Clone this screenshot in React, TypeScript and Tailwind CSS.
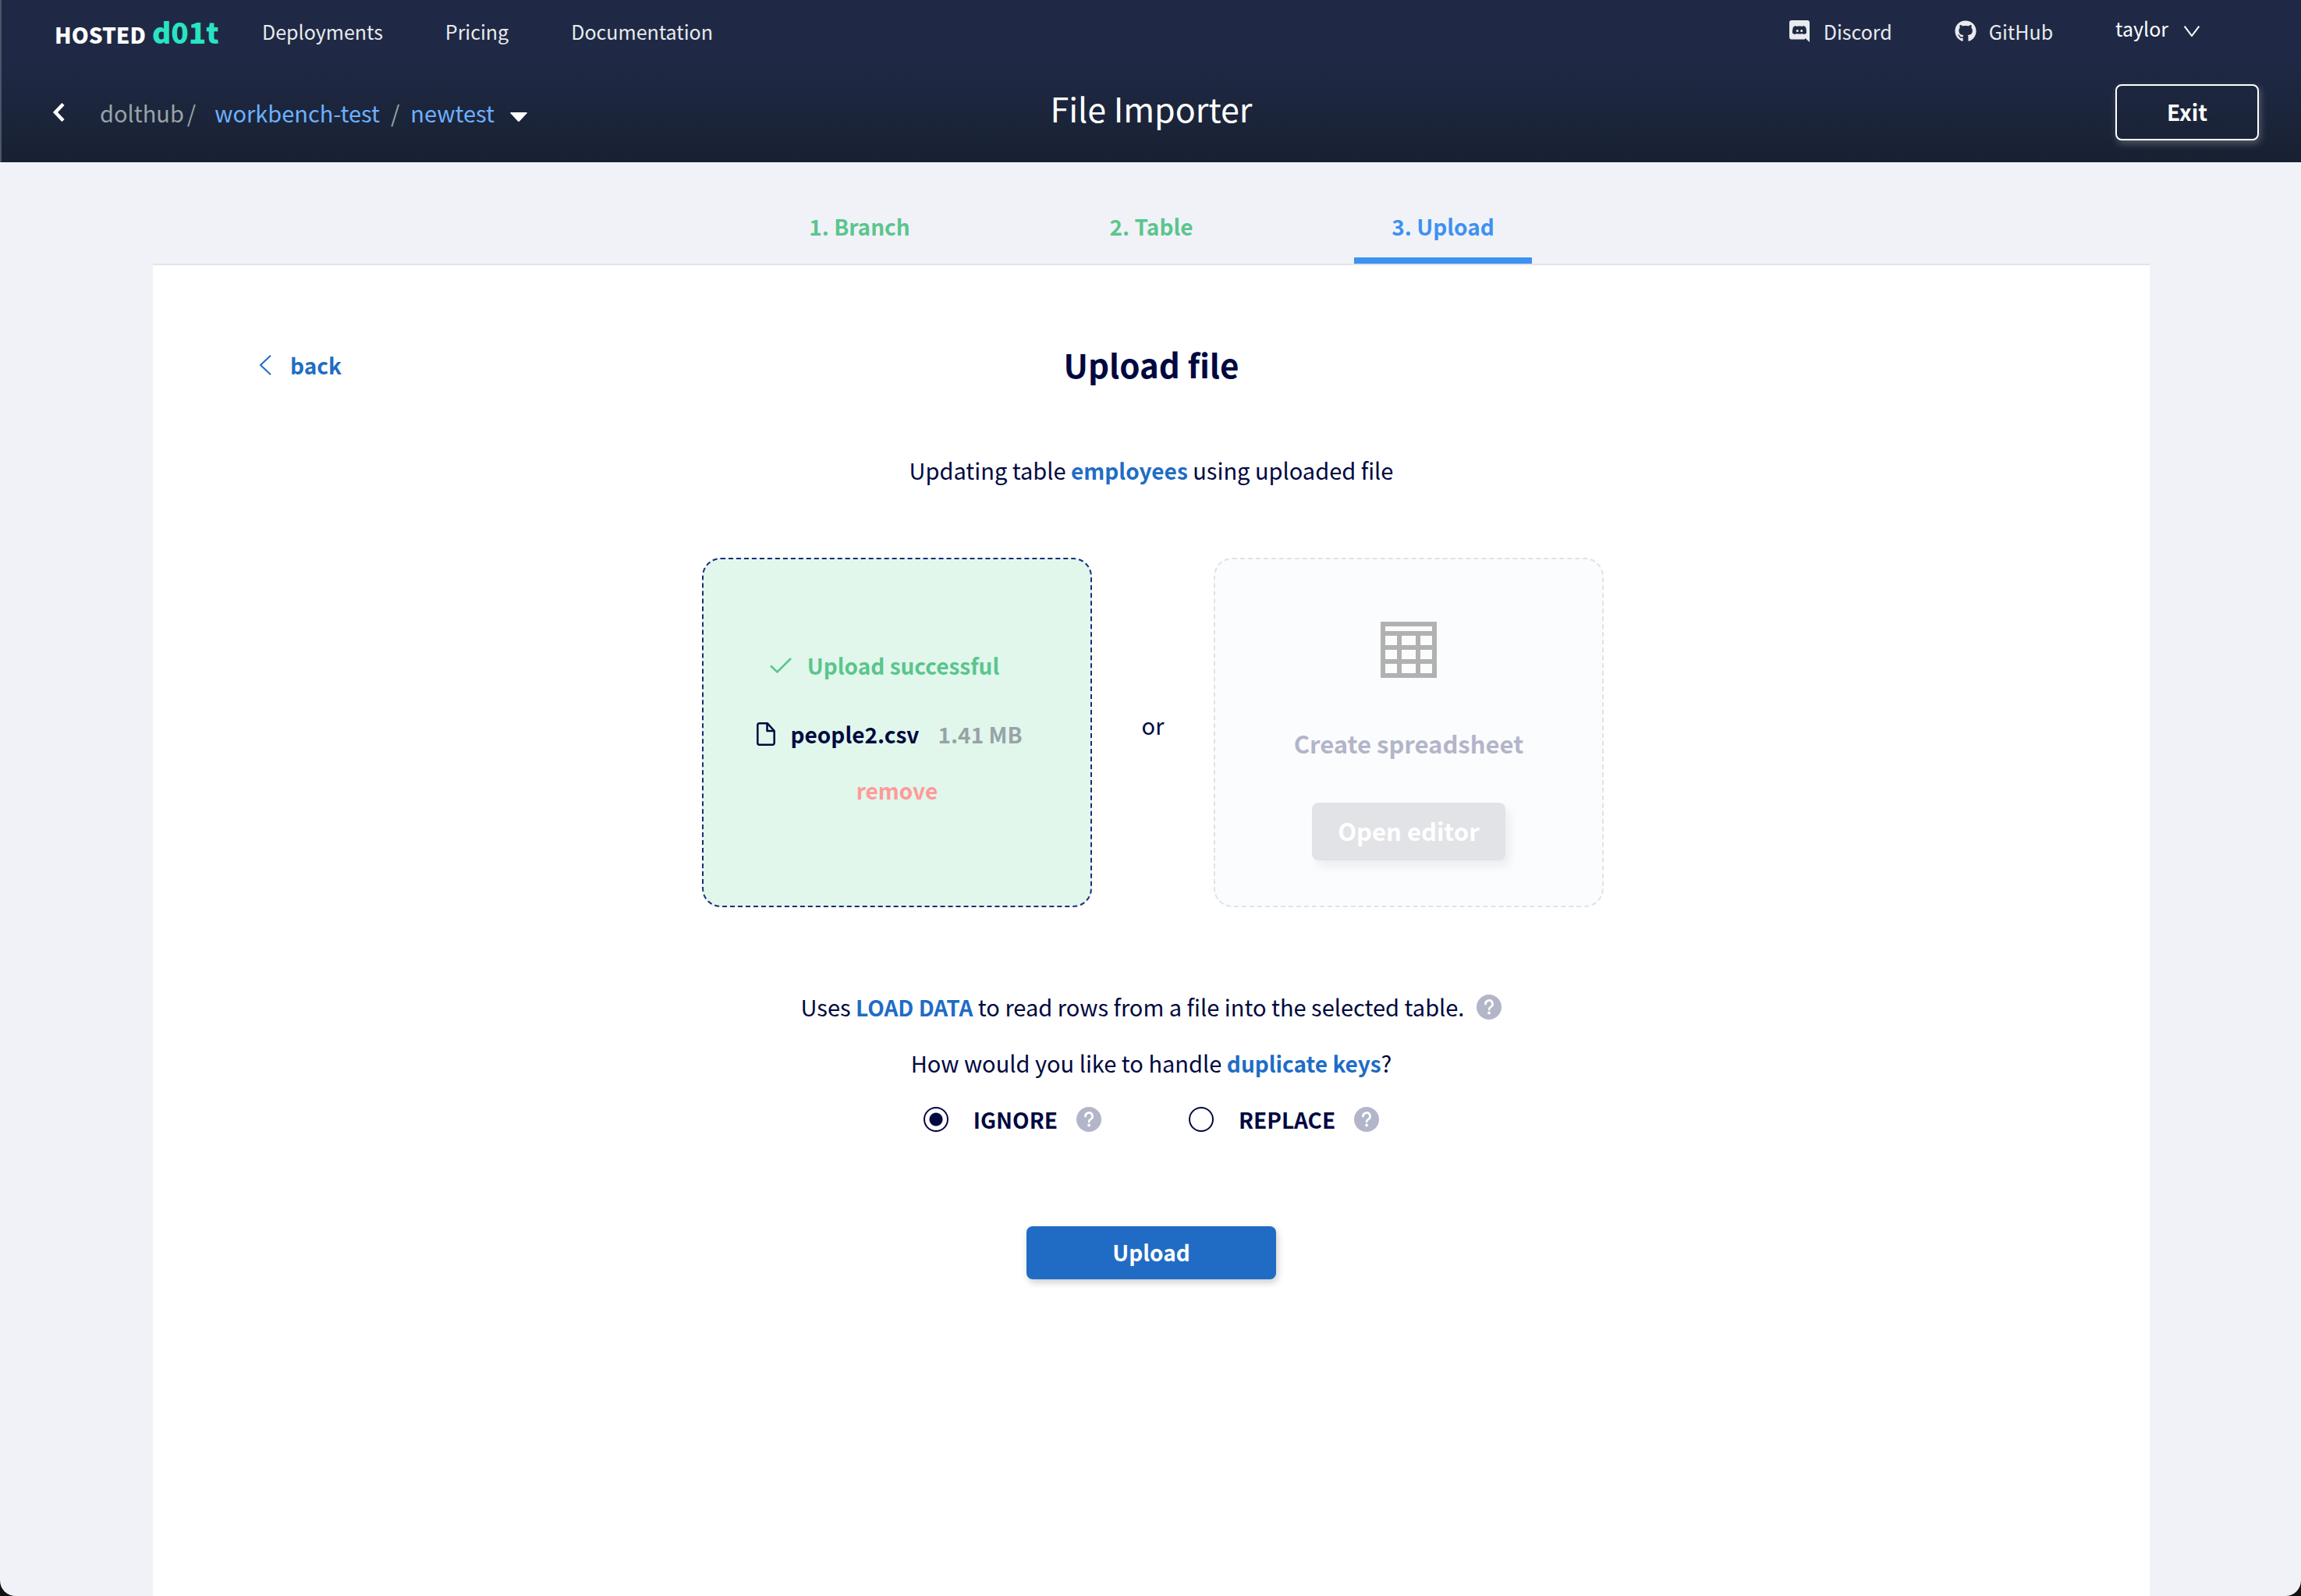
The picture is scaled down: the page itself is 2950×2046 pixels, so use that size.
import React, { useState } from "react";
import { FaGithub } from "react-icons/fa";

function QuestionIcon() {
  return (
    <button type="button" aria-label="More information" className="block h-8 w-8 shrink-0">
      <svg viewBox="0 0 32 32" className="h-8 w-8" aria-hidden="true">
        <circle cx="16" cy="16" r="16" fill="#b3b5c9" />
        <path d="M11.500 12a4.500 4.500 0 1 1 6.700 3.900c-1.500.9-2.100 1.700-2.100 3.200" fill="none" stroke="#fff" strokeWidth="2.800" strokeLinecap="round" />
        <circle cx="16.100" cy="23.500" r="1.900" fill="#fff" />
      </svg>
    </button>
  );
}

function Header() {
  return (
    <header className="h-52 border-l-2 border-[#4a5568] bg-linear-to-b from-[#1f2945] from-35% to-[#182132] text-white">
      <nav className="flex h-20 items-center pl-[68px] pr-[130px] text-[25px] leading-10 text-[#e9eaee]">
        <a href="#home" className="flex w-[210px] items-baseline gap-2 pt-1">
          <span className="text-[28px] font-black text-white">HOSTED</span>
          <span className="text-[37px] font-black text-[#29e3c1]">d01t</span>
        </a>
        <a href="#deployments" className="ml-14">Deployments</a>
        <a href="#pricing" className="ml-20">Pricing</a>
        <a href="#docs" className="ml-20">Documentation</a>
        <div className="ml-auto flex items-center">
          <a href="#discord" className="flex items-center gap-[18px]">
            <svg viewBox="0 0 26 28" className="h-7 w-[26px]" aria-hidden="true">
              <path fill="#e9eaee" fillRule="evenodd" d="M3 0h20a3 3 0 0 1 3 3v25l-5.500-5-.8 1.500H3a3 3 0 0 1-3-3V3a3 3 0 0 1 3-3zM8.500 7C6 7.500 5.200 8.500 5.200 8.500 4 11 3.900 15 4 16.200c1.500 1.800 4 1.900 4 1.900l.9-1.100c2.600.8 5.600.8 8.200 0l.9 1.100s2.500-.1 4-1.900c.1-1.200 0-5.200-1.200-7.700 0 0-.9-1-3.300-1.500l-.5.9c-2.600-.5-5.400-.5-8 0zM10.300 12a1.500 1.500 0 1 1 0 3.100 1.500 1.500 0 0 1 0-3.100zm5.400 0a1.500 1.500 0 1 1 0 3.100 1.500 1.500 0 0 1 0-3.100z" />
            </svg>
            Discord
          </a>
          <a href="#github" className="ml-20 flex items-center gap-4">
            <FaGithub className="h-7 w-7" />
            GitHub
          </a>
          <button type="button" className="ml-20 flex items-center gap-5 pb-2 text-white">
            taylor
            <svg viewBox="0 0 20 14" className="mt-2 h-[14px] w-5" fill="none" stroke="currentColor" strokeWidth="2" aria-hidden="true">
              <path d="M0.700 0.700 10 13 19.300 0.700" />
            </svg>
          </button>
        </div>
      </nav>
      <div className="grid h-32 grid-cols-[1fr_auto_1fr] items-start px-[54px]">
        <div className="flex items-center pl-2.5 pt-11 text-[29px] leading-10 text-[#98a3a6]">
          <a href="#back" aria-label="Back" className="text-white">
            <svg viewBox="0 0 18 24" className="h-6 w-[18px]" fill="none" stroke="currentColor" strokeWidth="4.500" aria-hidden="true">
              <path d="M15 1.500 5 12l10 10.500" />
            </svg>
          </a>
          <span className="ml-11">dolthub</span>
          <span className="ml-1">/</span>
          <a href="#workbench" className="ml-6 text-[#6db0fc]">workbench-test</a>
          <span className="ml-3.5">/</span>
          <a href="#newtest" className="ml-3.5 text-[#6db0fc]">newtest</a>
          <button type="button" aria-label="Choose database" className="ml-5 mt-3 h-3 w-[22px]">
            <svg viewBox="0 0 22 12" className="h-3 w-[22px]" aria-hidden="true"><path fill="#fff" d="M1 0h20q1.500 0 .5 1.200L12 11.500q-1 .8-2 0L.5 1.200Q-.5 0 1 0z" /></svg>
          </button>
        </div>
        <h1 className="pt-7 text-[43px] leading-[60px]">File Importer</h1>
        <button type="button" className="mt-7 h-[72px] w-[184px] justify-self-end rounded-lg border-2 border-white pb-0.5 text-[28px] font-bold shadow-[2px_4px_10px_rgba(255,255,255,0.25)]">Exit</button>
      </div>
    </header>
  );
}

function Tabs() {
  return (
    <nav className="flex h-[132px] items-end justify-center gap-[146px] border-b-2 border-[#e1e4e8] text-[28px] font-bold leading-10 text-[#5ac58d]">
      <a href="#branch" className="w-[228px] pb-7 text-center">1. Branch</a>
      <a href="#table" className="w-[228px] pb-7 text-center">2. Table</a>
      <a href="#upload" className="w-[228px] border-b-8 border-[#3d91f0] pb-5 text-center text-[#3d91f0]">3. Upload</a>
    </nav>
  );
}

function Cards() {
  return (
    <div className="mt-[92px] flex items-center justify-center pl-1 text-[28px] leading-10">
      <section className="flex h-[448px] w-[500px] flex-col items-center rounded-3xl border-2 border-dashed border-[#1c2b80] bg-[#e1f7eb] pt-[116px] font-bold">
        <p className="flex items-center gap-5 pr-8 text-[#5ac58d]">
          <svg viewBox="0 0 28 20" className="h-5 w-7" fill="none" stroke="currentColor" strokeWidth="2.500" aria-hidden="true">
            <path d="M1 10.500 9.500 18.500 27 1" />
          </svg>
          Upload successful
        </p>
        <p className="mt-12 flex items-center pr-5 text-[#000840]">
          <svg viewBox="0 0 24 30" className="h-[30px] w-6" fill="none" stroke="currentColor" strokeWidth="2.500" strokeLinejoin="round" aria-hidden="true">
            <path d="M3.500 1.300h10.500l8.700 9.700v15.500a2.200 2.200 0 0 1-2.200 2.200h-17a2.200 2.200 0 0 1-2.200-2.200v-23a2.200 2.200 0 0 1 2.200-2.200zM13.500 1.500v9.500h9" />
          </svg>
          <span className="ml-5">people2.csv</span>
          <span className="ml-6 text-[#96a3a7]">1.41 MB</span>
        </p>
        <button type="button" className="mt-8 text-[#ff9a99]">remove</button>
      </section>
      <p className="w-[156px] pb-5 text-center text-[29px]">or</p>
      <section className="flex h-[448px] w-[500px] flex-col items-center rounded-3xl border-2 border-dashed border-[#dfe3e6] bg-[#fbfcfe] pt-20 font-bold">
        <svg viewBox="0 0 72 72" className="h-[72px] w-[72px]" fill="none" stroke="#b1b1b1" strokeWidth="6" aria-hidden="true">
          <path d="M3 3h66v66H3zM3 15h66M3 33h66M3 51h66M24 15v54M48 15v54" />
        </svg>
        <h3 className="mt-16 text-[31px] text-[#b3b5c9]">Create spreadsheet</h3>
        <button type="button" disabled className="mt-14 h-[74px] w-[248px] rounded-lg bg-[#e2e3e7] pb-0.5 text-[31px] text-white shadow-[6px_8px_12px_rgba(0,0,0,0.06)]">Open editor</button>
      </section>
    </div>
  );
}

function Choice({ name, checked, onChange }: { name: string; checked: boolean; onChange: () => void }) {
  return (
    <div className="flex items-center">
      <label className="flex items-center gap-8 text-[28px] font-bold">
        <input
          type="radio"
          name="duplicates"
          checked={checked}
          onChange={onChange}
          className="h-8 w-8 appearance-none rounded-full border-2 border-[#000840] bg-white checked:bg-[radial-gradient(circle,#000840_0_8px,transparent_9px)]"
        />
        {name}
      </label>
      <div className="ml-6"><QuestionIcon /></div>
    </div>
  );
}

export default function App() {
  const [mode, setMode] = useState("IGNORE");
  return (
    <div className="min-h-screen bg-[#111]">
      <div className="flex min-h-screen flex-col overflow-hidden rounded-b-[20px] bg-[#f1f2f8] font-['Noto_Sans_CJK_SC',sans-serif] text-[#000840]">
        <Header />
        <main className="ml-[196px] mr-[194px] flex grow flex-col">
          <Tabs />
          <div className="grow bg-white pb-20 text-[29px] leading-10">
            <div className="grid grid-cols-[1fr_auto_1fr] items-center px-[136px] pt-[97px]">
              <a href="#back" className="flex items-center gap-6 pt-0.5 text-[28px] font-bold text-[#206cc5]">
                <svg viewBox="0 0 16 26" className="h-[26px] w-4" fill="none" stroke="currentColor" strokeWidth="2" aria-hidden="true">
                  <path d="M15 0.700 2 13l13 12.300" />
                </svg>
                back
              </a>
              <h2 className="text-[42px] font-bold leading-[60px]">Upload file</h2>
            </div>
            <p className="mt-[85px] text-center">
              Updating table <a href="#employees" className="text-[28px] font-bold text-[#206cc5]">employees</a> using uploaded file
            </p>
            <Cards />
            <div className="mt-[107px] flex items-center justify-center gap-4">
              <p>Uses <a href="#load" className="text-[28px] font-bold text-[#206cc5]">LOAD DATA</a> to read rows from a file into the selected table.</p>
              <QuestionIcon />
            </div>
            <fieldset className="mt-[31px]">
              <legend className="mx-auto">How would you like to handle <a href="#keys" className="text-[28px] font-bold text-[#206cc5]">duplicate keys</a>?</legend>
              <div className="mt-8 flex justify-center gap-28">
                <Choice name="IGNORE" checked={mode === "IGNORE"} onChange={() => setMode("IGNORE")} />
                <Choice name="REPLACE" checked={mode === "REPLACE"} onChange={() => setMode("REPLACE")} />
              </div>
            </fieldset>
            <button type="button" className="mx-auto mt-[117px] block h-[68px] w-80 rounded-lg bg-[#206cc5] pb-0.5 text-[28px] font-bold text-white shadow-[2px_4px_10px_rgba(0,0,0,0.2)]">Upload</button>
          </div>
        </main>
      </div>
    </div>
  );
}
